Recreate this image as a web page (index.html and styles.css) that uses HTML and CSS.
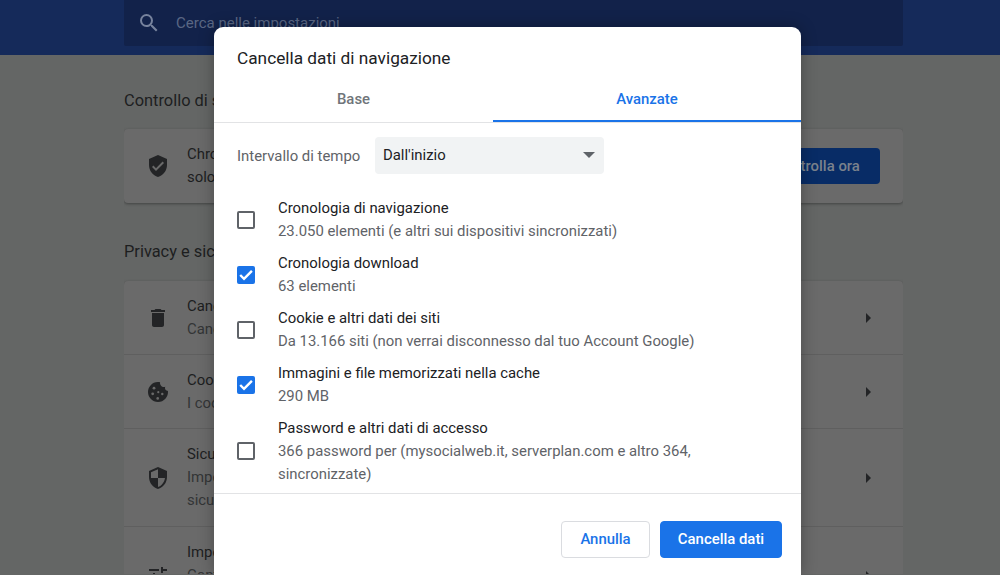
FILE: index.html
```html
<!DOCTYPE html>
<html lang="it">

<head>
    <meta charset="UTF-8">
    <title>Impostazioni</title>
    <link rel="stylesheet" href="styles.css">
</head>

<body>
    <!-- pagina dietro la finestra -->
    <div class="header">
        <div class="search">
            <svg class="search-icon" viewBox="0 0 24 24"><path d="M15.5 14h-.79l-.28-.27A6.47 6.47 0 0 0 16 9.5 6.5 6.5 0 1 0 9.5 16c1.61 0 3.09-.59 4.23-1.57l.27.28v.79l5 4.99L20.49 19l-4.99-5zm-6 0C7.01 14 5 11.99 5 9.5S7.01 5 9.5 5 14 7.01 14 9.5 11.99 14 9.5 14z"/></svg>
            <span>Cerca nelle impostazioni</span>
        </div>
    </div>

    <div class="main">
        <div class="section-title">Controllo di sicurezza</div>
        <div class="card check-card">
            <svg class="row-icon" viewBox="0 0 24 24"><path d="M12 1 3 5v6c0 5.55 3.84 10.74 9 12 5.16-1.26 9-6.45 9-12V5l-9-4zm-2 16-4-4 1.41-1.41L10 14.17l6.59-6.59L18 9l-8 8z"/></svg>
            <div class="check-text">Chrome può aiutarti a proteggerti da violazioni dei dati,<br>solo estensioni dannose e altro ancora</div>
            <div class="check-button">Controlla ora</div>
        </div>

        <div class="section-title second">Privacy e sicurezza</div>
        <div class="card">
            <div class="row row-first">
                <svg class="row-icon" viewBox="0 0 24 24"><path d="M6 19c0 1.1.9 2 2 2h8c1.1 0 2-.9 2-2V7H6v12zM19 4h-3.5l-1-1h-5l-1 1H5v2h14V4z"/></svg>
                <div class="row-text"><div>Cancella dati di navigazione</div><div class="row-sub">Cancella cronologia, cookie, cache e altro</div></div>
                <span class="arrow"></span>
            </div>
            <div class="row row-short">
                <svg class="row-icon" viewBox="0 0 24 24">
                    <path d="M21.95 10.99c-1.79-.03-3.7-1.95-2.68-4.22-2.97 1-5.78-1.59-5.19-4.56C7.11.74 2 6.41 2 12c0 5.52 4.48 10 10 10 5.89 0 10.54-5.08 9.95-11.01z"/>
                    <circle class="cookie-dot" cx="8" cy="8.2" r="1.4"/>
                    <circle class="cookie-dot" cx="6.7" cy="13.8" r="1.4"/>
                    <circle class="cookie-dot" cx="12.3" cy="12.2" r="1.1"/>
                    <circle class="cookie-dot" cx="16.3" cy="14" r="1.2"/>
                    <circle class="cookie-dot" cx="11.7" cy="18.4" r="1.3"/>
                </svg>
                <div class="row-text"><div>Cookie e altri dati dei siti</div><div class="row-sub">I cookie di terze parti sono bloccati</div></div>
                <span class="arrow"></span>
            </div>
            <div class="row row-tall">
                <svg class="row-icon" viewBox="0 0 24 24"><path d="M12 1 3 5v6c0 5.55 3.84 10.74 9 12 5.16-1.26 9-6.45 9-12V5l-9-4zm0 10.99h7c-.53 4.12-3.28 7.79-7 8.94V12H5V6.3l7-3.11v8.8z"/></svg>
                <div class="row-text"><div>Sicurezza</div><div class="row-sub">Impostazioni di sicurezza<br>sicurezza</div></div>
                <span class="arrow"></span>
            </div>
            <div class="row row-tall">
                <svg class="row-icon" viewBox="0 0 24 24"><path d="M3 17v2h6v-2H3zM3 5v2h10V5H3zm10 16v-2h8v-2h-8v-2h-2v6h2zM7 9v2H3v2h4v2h2V9H7zm14 4v-2H11v2h10zm-6-4h2V7h4V5h-4V3h-2v6z"/></svg>
                <div class="row-text"><div>Impostazioni sito</div><div class="row-sub">Controlla le informazioni<br>che i siti possono usare</div></div>
                <span class="arrow"></span>
            </div>
        </div>
    </div>

    <!-- finestra di dialogo -->
    <div class="dialog">
        <div class="dialog-title">Cancella dati di navigazione</div>

        <div class="tabs">
            <div class="tab tab-base">Base</div>
            <div class="tab tab-active">Avanzate</div>
        </div>

        <div class="dialog-body">
            <div class="time-range">
                <label>Intervallo di tempo</label>
                <div class="select">
                    <span>Dall'inizio</span>
                    <span class="select-arrow"></span>
                </div>
            </div>

            <div class="option">
                <span class="checkbox"></span>
                <div class="option-text">
                    <div>Cronologia di navigazione</div>
                    <div class="option-sub">23.050 elementi (e altri sui dispositivi sincronizzati)</div>
                </div>
            </div>
            <div class="option">
                <span class="checkbox checked">
                    <svg viewBox="0 0 18 18"><path d="M3.2 9 7 12.8 14.9 4.8"/></svg>
                </span>
                <div class="option-text">
                    <div>Cronologia download</div>
                    <div class="option-sub">63 elementi</div>
                </div>
            </div>
            <div class="option">
                <span class="checkbox"></span>
                <div class="option-text">
                    <div>Cookie e altri dati dei siti</div>
                    <div class="option-sub">Da 13.166 siti (non verrai disconnesso dal tuo Account Google)</div>
                </div>
            </div>
            <div class="option">
                <span class="checkbox checked">
                    <svg viewBox="0 0 18 18"><path d="M3.2 9 7 12.8 14.9 4.8"/></svg>
                </span>
                <div class="option-text">
                    <div>Immagini e file memorizzati nella cache</div>
                    <div class="option-sub">290 MB</div>
                </div>
            </div>
            <div class="option">
                <span class="checkbox"></span>
                <div class="option-text">
                    <div>Password e altri dati di accesso</div>
                    <div class="option-sub">366 password per (mysocialweb.it, serverplan.com e altro 364, sincronizzate)</div>
                </div>
            </div>
        </div>

        <div class="dialog-footer">
            <button class="btn">Annulla</button>
            <button class="btn btn-primary">Cancella dati</button>
        </div>
    </div>
</body>

</html>
```

FILE: styles.css
```css
html,
body {
    margin: 0;
    padding: 0;
    height: 575px;
    overflow: hidden;
}

body {
    background-color: #646665;
    font-family: Roboto, "Liberation Sans", sans-serif;
    font-size: 14.9px;
    color: #202124;
}

.header {
    height: 55px;
    background: #152a5a;
}

.search {
    margin-left: 124px;
    width: 779px;
    height: 46px;
    background: #12224a;
    border-radius: 0 0 2px 2px;
    display: flex;
    align-items: center;
    color: #5a6784;
    font-size: 15px;
}

.search-icon {
    width: 24px;
    height: 24px;
    margin-left: 13px;
    margin-right: 15px;
    fill: #77839d;
}

.main {
    width: 779px;
    height: 520px;
    margin-left: 124px;
    padding-top: 1px;
    margin-top: -1px;
    box-sizing: border-box;
    overflow: hidden;
    color: #202020;
}

.section-title {
    margin-top: 36px;
    height: 38px;
    font-size: 16.4px;
    color: #1d1e1f;
}

.section-title.second {
    margin-top: 39px;
    height: 39px;
}

.card {
    background: #6a6a6a;
    border-radius: 4px;
    box-shadow: 0 1px 3px rgba(0, 0, 0, 0.35);
}

.check-card {
    height: 74px;
    display: flex;
    align-items: center;
    padding-right: 23px;
}

.row-icon {
    width: 24px;
    height: 24px;
    margin-left: 22px;
    margin-right: 17px;
    flex-shrink: 0;
    fill: #232426;
}

.cookie-dot {
    fill: #6a6a6a;
}

.check-text {
    flex-grow: 1;
    line-height: 23px;
    white-space: nowrap;
    overflow: hidden;
    color: #1d1e1f;
}

.check-button {
    background: #082c66;
    color: #7b828c;
    font-weight: 500;
    border-radius: 4px;
    width: 126px;
    height: 36px;
    line-height: 36px;
    text-align: center;
    flex-shrink: 0;
}

.row {
    display: flex;
    align-items: center;
    border-top: 1px solid #5f5f5f;
    padding-right: 32px;
    box-sizing: border-box;
    line-height: 23px;
}

.row:first-child {
    border-top: none;
}

.row-first {
    height: 73px;
}

.row-short {
    height: 74px;
}

.row-tall {
    height: 98px;
}

.row-text {
    flex-grow: 1;
    white-space: nowrap;
    color: #1d1e1f;
}

.row-sub {
    color: #333536;
}

.arrow {
    width: 0;
    height: 0;
    border-top: 5px solid transparent;
    border-bottom: 5px solid transparent;
    border-left: 5px solid #232426;
}

.dialog {
    position: absolute;
    left: 214px;
    top: 27px;
    width: 587px;
    height: 548px;
    background: white;
    border-radius: 9px 9px 0 0;
    box-shadow: 0 0 16px rgba(0, 0, 0, 0.3);
}

.dialog-title {
    height: 59px;
    padding: 21px 0 0 23px;
    box-sizing: border-box;
    font-size: 17.25px;
    line-height: 21px;
}

.tabs {
    display: flex;
    height: 36px;
    border-bottom: 1px solid #e2e3e5;
}

.tab {
    height: 36px;
    line-height: 27px;
    text-align: center;
    font-weight: 500;
    color: #70757a;
}

.tab-base {
    width: 279px;
}

.tab-active {
    width: 308px;
    color: #1a73e8;
    box-sizing: border-box;
    border-bottom: 2px solid #1a73e8;
}

.dialog-body {
    padding: 0 23px;
    height: 371px;
    box-sizing: border-box;
    border-bottom: 1px solid #e2e3e5;
}

.time-range {
    display: flex;
    align-items: center;
    padding-top: 14px;
    margin-bottom: 18px;
    color: #5f6368;
}

.time-range label {
    width: 138px;
}

.select {
    width: 229px;
    height: 37px;
    background: #f1f3f4;
    border-radius: 4px;
    display: flex;
    align-items: center;
    justify-content: space-between;
    padding: 0 9px 1px 8px;
    box-sizing: border-box;
    color: #202124;
}

.select-arrow {
    width: 0;
    height: 0;
    border-left: 6px solid transparent;
    border-right: 6px solid transparent;
    border-top: 6px solid #5f6368;
}

.option {
    display: flex;
    align-items: center;
    padding: 4.5px 0;
}

.option-text {
    margin-left: 23px;
    max-width: 450px;
    line-height: 23px;
}

.option-sub {
    color: #5f6368;
}

.checkbox {
    width: 18px;
    height: 18px;
    box-sizing: border-box;
    border: 2px solid #5f6368;
    border-radius: 2px;
    flex-shrink: 0;
    display: block;
}

.checkbox.checked {
    background: #1a73e8;
    border: none;
}

.checkbox svg {
    display: block;
    width: 18px;
    height: 18px;
    fill: none;
    stroke: white;
    stroke-width: 2.4;
}

.dialog-footer {
    display: flex;
    justify-content: flex-end;
    gap: 10px;
    padding: 27px 19px 0 0;
}

.btn {
    height: 37px;
    width: 89px;
    padding: 0 0 2px;
    font-family: inherit;
    font-size: 14.9px;
    font-weight: 500;
    background: white;
    color: #1a73e8;
    border: 1px solid #dadce0;
    border-radius: 4px;
}

.btn-primary {
    width: 122px;
    background: #1a73e8;
    border-color: #1a73e8;
    color: white;
}
```
